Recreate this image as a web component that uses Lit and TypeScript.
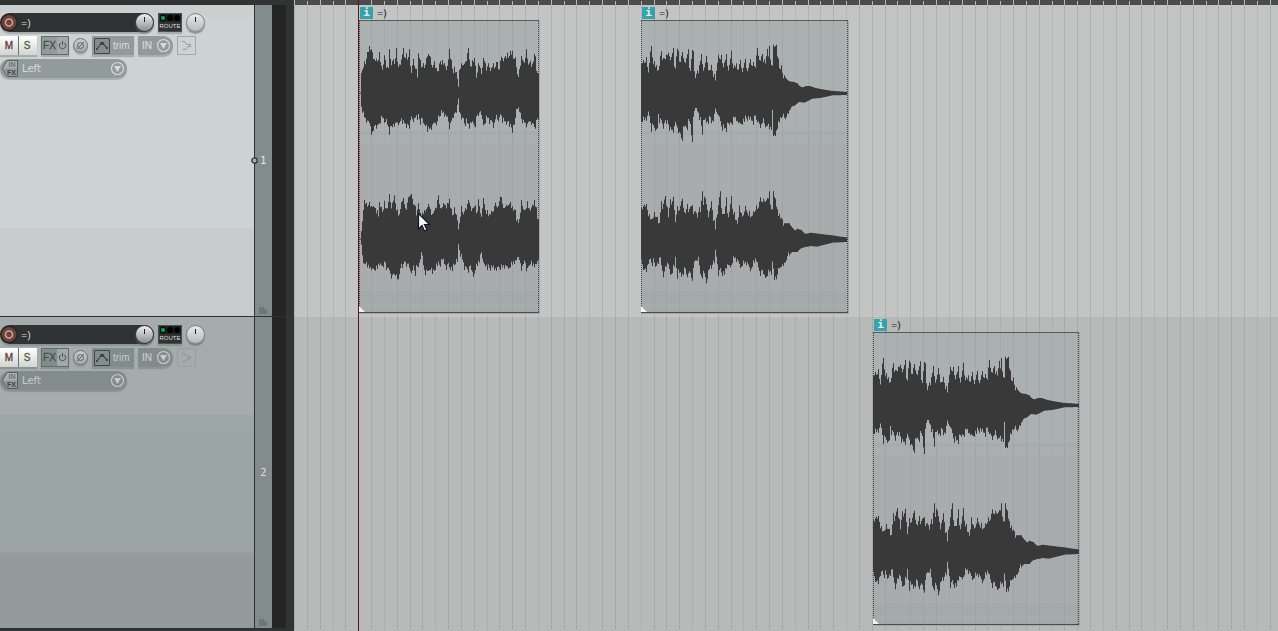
import { LitElement, html, svg, css } from "lit";
import { customElement, property } from "lit/decorators.js";
import { styleMap } from "lit/directives/style-map.js";

interface Clip {
  start: number;
  length: number;
  name: string;
  wave: string[];
}

interface Track {
  number: number;
  name: string;
  selected: boolean;
  clips: Clip[];
}

const STEP = 12.84;
const ARRANGE_SPAN = 4000;

/* Peak outlines, three units to a pixel, x counted from the clip's left edge. */
const INTRO_LEFT =
  "6,280 8,218 11,210 15,184 21,188 25,156 28,160 31,138 36,148 41,158 46,178 49,184 53,176 56,186 61,156 65,190 68,200 72,210 76,166 80,182 85,200 89,205 91,148 95,180 99,186 103,178 107,194 112,144 116,190 122,194 127,182 133,144 137,176 142,160 145,182 151,148 155,206 159,208 163,176 168,206 172,206 176,236 178,160 183,180 188,204 193,190 197,206 201,178 207,162 214,170 217,194 222,202 226,184 231,204 236,215 243,184 250,180 257,190 265,202 271,146 276,180 280,206 283,224 286,200 291,216 295,236 298,270 301,212 307,190 313,196 319,188 328,144 332,184 337,202 341,180 346,174 350,200 354,234 358,190 364,204 368,225 373,174 379,190 384,204 389,190 394,214 398,204 403,190 407,208 411,186 416,186 421,212 425,182 428,170 435,176 440,168 446,158 451,170 455,152 460,152 464,180 469,172 473,206 478,234 482,208 488,168 493,184 498,190 502,148 506,180 511,190 515,182 520,194 526,162 530,170 534,218 539,220 539,358 531,360 528,386 523,370 518,374 513,362 508,366 503,382 496,366 491,370 487,354 482,335 475,326 470,352 465,374 461,398 456,376 451,380 446,364 441,374 435,360 429,368 424,340 419,364 414,356 408,358 404,384 398,360 392,372 385,352 379,370 373,376 368,345 362,336 358,348 353,346 348,382 342,366 336,368 330,386 324,364 318,378 313,352 307,358 302,336 298,290 293,338 288,336 282,354 277,362 272,388 267,354 261,348 257,350 250,338 245,348 240,350 233,376 228,366 223,370 216,390 210,386 205,395 200,378 194,370 188,350 184,374 179,340 174,360 168,350 162,366 157,348 152,386 147,370 142,384 136,368 130,372 124,362 119,376 113,366 107,380 101,382 96,376 91,404 86,374 80,366 75,368 70,352 64,370 58,372 53,386 47,376 43,392 38,404 34,374 28,362 22,368 17,352 11,338 8,320 6,280";
const INTRO_RIGHT =
  "6,238 9,188 12,180 15,120 21,128 27,140 31,126 36,138 42,138 48,144 54,150 58,178 61,126 66,140 71,158 76,122 81,146 87,140 91,102 95,130 99,136 105,106 110,132 116,150 121,166 126,130 133,114 139,146 144,134 149,112 155,106 157,102 161,118 168,138 174,160 178,130 184,160 190,158 196,150 202,148 208,132 215,148 222,162 228,148 234,128 238,106 243,144 248,146 253,130 259,136 265,130 271,116 276,146 281,168 286,142 292,164 296,184 298,210 302,190 307,138 313,164 319,146 329,120 335,140 343,144 350,136 355,160 359,118 364,160 369,158 374,114 379,150 385,150 390,164 398,152 404,154 408,128 413,140 419,138 424,110 428,112 433,144 438,144 443,134 449,136 455,126 461,140 468,150 474,178 479,190 484,164 488,120 493,148 499,152 504,124 509,146 516,146 521,134 527,120 531,142 534,176 539,180 539,300 533,312 527,322 521,318 515,312 509,318 503,334 497,300 493,312 487,332 482,300 478,290 473,300 467,312 460,314 454,322 448,326 442,318 436,326 430,322 424,330 418,318 412,332 407,330 401,322 395,332 390,320 384,330 378,316 372,304 365,280 360,308 355,318 350,328 344,350 338,330 333,310 328,338 322,320 316,330 310,296 305,290 298,250 294,306 290,312 285,316 279,334 273,328 268,306 262,330 256,310 250,298 245,320 240,312 235,318 228,330 221,342 215,330 208,332 199,346 194,316 190,282 184,298 178,322 174,318 169,348 165,322 158,340 153,330 148,308 143,320 138,300 134,310 130,324 125,322 119,358 114,358 109,346 103,340 98,356 93,334 88,322 83,330 77,302 73,322 67,316 61,316 55,326 49,332 43,326 37,330 31,324 25,322 19,312 14,310 10,282 6,238";
const OUTRO_LEFT =
  "2,190 6,180 10,190 15,172 20,204 24,206 28,160 30,138 33,172 39,184 45,196 51,210 54,214 58,172 60,154 63,186 66,174 71,176 75,164 78,172 81,158 86,170 91,174 96,144 100,200 104,206 108,146 112,152 116,190 119,186 123,156 128,176 134,190 141,148 145,204 150,204 153,150 157,154 161,222 165,228 169,212 174,206 180,162 184,192 190,206 195,168 200,190 206,212 210,194 215,214 219,222 223,246 227,212 231,164 236,176 240,164 244,190 250,190 255,162 259,198 265,200 270,152 274,190 281,196 286,190 292,212 297,180 302,206 306,212 312,176 317,208 322,208 327,178 332,198 337,186 344,204 348,144 353,170 358,184 363,162 369,178 374,192 379,146 382,176 385,138 389,184 394,206 398,134 402,140 406,134 411,176 415,206 420,196 424,218 430,226 436,236 444,244 459,246 468,250 476,258 484,262 496,258 506,258 524,264 544,268 569,272 594,274 618,276 618,285 574,286 539,294 514,296 499,304 489,308 474,306 462,316 452,320 442,342 432,358 424,350 416,366 408,386 402,408 398,408 394,318 390,390 385,388 379,376 374,382 369,366 363,368 358,384 353,364 348,366 342,340 337,374 331,360 325,358 320,362 315,352 309,366 304,374 298,370 291,370 285,362 280,352 274,374 269,366 265,374 261,366 255,396 249,382 244,392 238,360 233,346 228,340 223,324 218,364 212,370 207,344 201,372 195,366 189,358 184,404 179,350 174,360 170,334 165,320 161,330 157,350 153,426 149,372 144,360 139,390 134,376 129,380 123,422 118,398 112,400 106,372 101,376 96,398 91,388 86,392 81,364 76,372 71,366 66,386 61,358 56,370 54,336 50,384 42,392 36,370 30,396 26,348 20,346 15,362 9,360 4,366 2,366";
const OUTRO_RIGHT =
  "2,144 6,142 10,134 12,148 15,132 20,152 26,164 32,178 39,156 44,172 50,170 56,190 60,124 64,150 67,134 72,108 77,140 80,142 83,178 87,118 91,136 96,110 100,150 105,190 108,138 112,154 117,144 123,116 128,146 134,162 139,132 144,150 149,140 154,136 159,156 164,154 171,170 174,142 180,150 183,94 187,140 190,110 194,116 199,150 204,164 210,124 214,150 219,180 223,214 226,176 231,150 237,94 242,150 247,162 251,162 255,112 259,160 265,160 270,108 274,146 280,156 286,180 291,188 296,136 302,162 308,166 313,138 319,160 325,152 331,170 337,154 343,154 347,136 352,146 357,112 362,126 367,116 374,126 379,116 385,94 389,140 394,156 398,94 402,116 408,148 416,162 424,178 430,190 444,190 452,200 462,212 470,206 480,210 494,222 509,218 539,222 574,226 599,230 618,232 618,246 574,248 544,256 529,260 509,258 489,262 479,266 469,276 454,276 444,286 434,306 426,318 418,322 410,342 405,358 399,360 395,300 390,344 385,336 379,348 374,354 368,342 363,324 358,348 352,320 346,302 340,308 334,320 328,334 322,312 316,316 310,310 304,318 298,324 292,302 286,306 280,294 274,310 268,322 262,314 256,326 250,344 244,348 238,322 232,348 227,290 223,266 219,310 212,326 206,324 200,356 195,370 190,336 184,356 178,340 174,302 168,302 162,300 157,324 153,362 148,336 143,338 138,352 132,318 126,346 120,350 114,334 108,356 105,292 99,320 94,340 88,344 82,310 76,320 66,352 62,316 56,290 51,312 44,320 39,302 34,318 28,294 22,312 16,336 8,330 4,310 2,300";

const TRACKS: Track[] = [
  {
    number: 1,
    name: "=)",
    selected: true,
    clips: [
      { start: 65, length: 180, name: "=)", wave: [INTRO_LEFT, INTRO_RIGHT] },
      { start: 347, length: 207, name: "=)", wave: [OUTRO_LEFT, OUTRO_RIGHT] },
    ],
  },
  {
    number: 2,
    name: "=)",
    selected: false,
    clips: [{ start: 579, length: 206, name: "=)", wave: [OUTRO_LEFT, OUTRO_RIGHT] }],
  },
];

/* Turns an outline into one vertical bar per pixel; bars beside a peak drop a little. */
const bars = (points: string, centre: number) => {
  const pts = points.split(" ").map((p) => p.split(",").map(Number));
  const turn = pts.findIndex((p, i) => i > 0 && p[1] > centre && pts[i - 1][1] < centre);
  const upper = pts.slice(0, turn);
  const lower = pts.slice(turn).reverse();
  const level = (side: number[][], col: number) => {
    const from = col * 3;
    const inside = side.filter((p) => p[0] >= from && p[0] < from + 3).map((p) => Math.abs(p[1] - centre));
    const i = side.findIndex((p) => p[0] >= from + 1.5);
    let mid = 0;
    if (i > 0) {
      const [a, b] = [side[i - 1], side[i]];
      mid = Math.abs(a[1] + ((b[1] - a[1]) * (from + 1.5 - a[0])) / (b[0] - a[0]) - centre);
    }
    if (inside.length) return Math.max(mid, ...inside);
    return mid > 50 ? mid - ((col * 7) % 5) * 3 : mid;
  };
  let d = "";
  const last = Math.ceil(upper[upper.length - 1][0] / 3);
  for (let col = Math.floor(upper[0][0] / 3); col < last; col++) {
    d += `M${col * 3 + 1.5} ${centre - level(upper, col)}V${centre + level(lower, col)}`;
  }
  return d;
};

const gridLines = (from: number, length: number, light: string, dark: string) => {
  const lines = [];
  for (let k = 0; k * STEP < from + length; k++) {
    const x = Math.round(k * STEP) - from;
    if (x < 0) continue;
    lines.push(svg`<path d="M${x + 0.5} 0V400" stroke=${k % 4 === 3 ? light : dark} stroke-dasharray="1 1"/>`);
  }
  return lines;
};

@customElement("daw-clip")
class DawClip extends LitElement {
  @property({ attribute: false }) clip!: Clip;

  static styles = css`
    :host { display: block; font: 11px/14px "Open Sans", sans-serif; color: #181c1e; }
    .label { display: flex; align-items: center; gap: 4px; height: 15px; padding-left: 1px; }
    .info {
      width: 13px; height: 12px; padding: 0; border: 0; background: #38a2aa; color: #d8f2f2;
      font: bold 11px/12px "DejaVu Sans Mono", monospace; text-align: center;
    }
    .body {
      position: relative; height: 293px; box-sizing: border-box;
      border-top: 1px solid #575c59; border-bottom: 1px solid #4a4d4d;
      box-shadow: 1px 1px 0 #a3a6a5;
      background: linear-gradient(#abb1b1 0 110px, #a6acac 110px 114px, #aaafb0 114px 122px,
        #a8acad 122px 270px, #a2abaa 270px 283px, #a7abac 283px 287px, #a2abaa 287px);
    }
    svg { display: block; width: 100%; height: 100%; }
  `;

  render() {
    const { start, length, name, wave } = this.clip;
    return html`
      <div class="label"><button class="info" aria-label="Item info">i</button><span>${name}</span></div>
      <div class="body">
        <svg aria-hidden="true">
          <g shape-rendering="crispEdges">
            ${gridLines(start, length, "#a2a8a8", "#959b9b")}
            <path d="M.5 0V291M${length - 0.5} 0V291" stroke="#454848" stroke-dasharray="1 1"/>
          </g>
          <g stroke="#393939" stroke-width="3.1" transform="translate(0 -21) scale(.33333)">
            <path d="M0 280H${length * 3}"/>
            <path d=${bars(wave[0], 280)}/>
            <g transform="translate(0 480)">
              <path d="M0 238H${length * 3}"/>
              <path d=${bars(wave[1], 238)}/>
            </g>
          </g>
          <path d="M0 285L7 292H0Z" fill="#f0f6f6"/>
        </svg>
      </div>
    `;
  }
}

@customElement("track-panel")
class TrackPanel extends LitElement {
  @property({ attribute: false }) track!: Track;

  static styles = css`
    :host { display: flex; height: 311px; border-bottom: 1px solid #2e3131; font: 11px/19px "Liberation Sans", sans-serif; }
    .panel {
      flex: 1; display: flex; flex-direction: column; align-items: flex-start; gap: 4px;
      padding-top: 8px; border-right: 1px solid #2e3232;
      --face: #929b9b; --ink: #d4dbdb;
      background: linear-gradient(#c9cfcf, #cdd3d3 20px, #cdd3d3 223px, #c8cccd 223px);
    }
    .panel.idle {
      --face: #838c8c; --ink: #c4cbca;
      background: linear-gradient(#a4adac 0 98px, #9ea7a8 98px 114px, #9ba5a3 114px 235px,
        #9c9c9d 235px 239px, #939c9a 239px);
    }
    .row { display: flex; align-items: center; height: 19px; }
    button, input, select { box-sizing: border-box; margin: 0; padding: 0; border: 0; font: inherit; color: inherit; appearance: none; }
    svg { display: block; }
    .shade { box-shadow: 0 2px 1px #5a646455; }
    .name { display: flex; align-items: center; width: 154px; height: 19px; background: #303333; border-radius: 10px; }
    .rec { width: 18px; height: 19px; background: none; }
    .name input.title { flex: 1; min-width: 0; height: 19px; padding-left: 3px; background: none; color: #d8dcdc; font: 11px/19px "Open Sans", sans-serif; }
    .knob {
      width: 19px; height: 19px; border-radius: 50%; border: 1px solid #3c4040;
      background: linear-gradient(#222, #222) center 3px / 1px 5px no-repeat, linear-gradient(#eee, #8c8f8f);
      box-shadow: 0 2px 1px #5a646488;
    }
    .knob.pan { border-color: #7c8282; background: linear-gradient(#222, #222) center 3px / 1px 5px no-repeat, linear-gradient(#e4e8e8, #b8bcbc); }
    .knob::-webkit-slider-thumb { appearance: none; width: 0; height: 0; }
    .route { width: 24px; height: 19px; margin: 0 4px; background: #303333; color: #d8dcdc; font-size: 6px; line-height: 9px; border: 1px solid #4b5050; }
    .row.mix { gap: 4px; color: var(--ink); }
    .pair { display: flex; height: 19px; }
    .ms { width: 18px; background: linear-gradient(#fff, #d2d3d3); color: #5c3a34; font-size: 10px; -webkit-text-stroke: .3px; }
    .ms.solo { border-left: 1px solid #6a7070; width: 19px; padding-right: 2px; color: #55602c; }
    .pair.fx { width: 28px; border: 1px solid #636c6c; box-sizing: border-box; color: #485050; font-size: 10px; line-height: 17px; }
    .fx button:first-child { flex: 1; background: var(--face); -webkit-text-stroke: .3px; }
    .fx button:last-child { width: 11px; background: #a0a9a9; }
    .round { width: 15px; height: 15px; border-radius: 50%; border: 1px solid #6a7272; background: linear-gradient(#c8cdcd, #a2a9a9); }
    .trim { display: flex; align-items: center; gap: 3px; width: 42px; height: 19px; background: var(--face); font-size: 10px; padding-left: 2px; }
    .in { display: flex; align-items: center; gap: 4px; width: 35px; height: 19px; padding-left: 4px; background: var(--face); border-radius: 0 10px 10px 0; font-size: 10px; -webkit-text-stroke: .2px; }
    .ghost { width: 19px; height: 19px; border: 1px solid #939b9b; background: none; opacity: .75; }
    .input { display: flex; align-items: center; width: 127px; height: 19px; border-radius: 10px; background: var(--face); color: var(--ink); }
    .infx { width: 18px; height: 19px; background: none; }
    .input select { flex: 1; height: 19px; padding-left: 4px; background: none; font: 10px/19px "DejaVu Sans", sans-serif; }
    .input .arrow { margin-right: 2px; }
    .strip {
      position: relative; display: flex; flex-direction: column; justify-content: center; align-items: center;
      width: 17px; background: #828c8d; color: #e2eaec; font: 10px/12px "DejaVu Sans", sans-serif;
    }
    .strip.idle { color: #e4dfc4; }
    .folder { position: absolute; bottom: 2px; left: 4px; }
    .node { position: absolute; left: -4px; top: 152px; }
    .meter { width: 14px; background: #252525; }
  `;

  arrow() {
    return html`<svg class="arrow" width="15" height="15" viewBox="0 0 15 15" aria-hidden="true">
      <circle cx="7.5" cy="7.5" r="6" fill="none" stroke="currentColor" stroke-width="1.2"/>
      <path d="M4 5H11L7.5 11Z" fill="currentColor"/></svg>`;
  }

  render() {
    const { number, name, selected } = this.track;
    const idle = selected ? "" : "idle";
    return html`
      <div class="panel ${idle}">
        <div class="row">
          <div class="name shade">
            <button class="rec" aria-label="Record arm">
              <svg width="18" height="19" viewBox="0 0 18 19">
                <circle cx="9" cy="9.5" r="8.5" fill="#231b19"/><circle cx="9" cy="9.5" r="7.5" fill="#6b4239"/>
                <circle cx="9" cy="9.5" r="3.5" fill="#6d3f36" stroke="#c9a79e" stroke-width="1.6"/>
              </svg>
            </button>
            <input class="title" aria-label="Track name" .value=${name} />
            <input class="knob" type="range" aria-label="Volume" />
          </div>
          <button class="route shade" aria-label="Route">
            <svg width="22" height="8" viewBox="0 0 22 8"><path d="M1 0H22V8H1Z" fill="#1f2121"/>
              <circle cx="4" cy="4" r="2.7" fill="#0c9a50" stroke="#000"/><circle cx="11" cy="4" r="3" fill="#000"/><circle cx="18" cy="4" r="3" fill="#000"/></svg>
            ROUTE
          </button>
          <input class="knob pan" type="range" aria-label="Pan" />
        </div>
        <div class="row mix">
          <div class="pair shade"><button class="ms">M</button><button class="ms solo">S</button></div>
          <div class="pair fx shade">
            <button>FX</button>
            <button aria-label="FX bypass"><svg width="11" height="11" viewBox="0 0 11 11" fill="none" stroke="currentColor"><path d="M3.5 3A3.2 3.2 0 1 0 7.500 3M5.500 1V5"/></svg></button>
          </div>
          <button class="round shade" aria-label="Phase">
            <svg width="13" height="13" viewBox="0 0 13 13" fill="none" stroke="#5c6464"><circle cx="6.5" cy="6.500" r="3"/><path d="M3 10L10 3"/></svg>
          </button>
          <button class="trim shade">
            <svg width="16" height="16" viewBox="0 0 16 16"><path d="M.5 .5H15.500V15.500H.500Z" fill="#848e8e" stroke="#3f4747"/><path d="M3 11L7 5.500H9L13 10" fill="none" stroke="#3f4747" stroke-width="1.200"/><path d="M6 4H10V7H6ZM2 10H4V12H2ZM12 9H14V11H12Z" fill="#3f4747"/></svg>
            trim
          </button>
          <button class="in shade">IN ${this.arrow()}</button>
          <button class="ghost" aria-label="Input routing">
            <svg width="17" height="17" viewBox="0 0 17 17" fill="none" stroke="#7f8888"><path d="M4 4.500H6.500L9 7.500H12.500V9.500H10L7.500 12.500H5"/></svg>
          </button>
        </div>
        <div class="row">
          <div class="input shade">
            <button class="infx" aria-label="Input FX">
              <svg width="18" height="19" viewBox="0 0 18 19">
                <path d="M17.500 1.500V17.500H7L2.500 9.500L7 1.500Z" fill="#a9b1b1" stroke="#566060"/><path d="M17 9.500V17H7L3.500 9.500Z" fill="#8f9999"/>
                <g font-family="Liberation Sans" font-size="7" font-weight="bold" text-anchor="middle"><text x="12" y="8" fill="#6a7474">IN</text><text x="11.500" y="16" fill="#3f4747">FX</text></g>
              </svg>
            </button>
            <select aria-label="Record input"><option>Left</option><option>Right</option></select>
            ${this.arrow()}
          </div>
        </div>
      </div>
      <div class="strip ${idle}">
        ${selected ? html`<svg class="node" width="7" height="7" viewBox="0 0 7 7" aria-hidden="true"><circle cx="3.500" cy="3.500" r="2.700" fill="#a9b0b0" stroke="#303434" stroke-width="1.300"/></svg>` : ""}
        <span>${number}</span>
        <svg class="folder" width="8" height="7" viewBox="0 0 8 7" aria-hidden="true"><path d="M0 0H5V2H8V7H0Z" fill="#6e7778"/></svg>
      </div>
      <div class="meter"></div>
    `;
  }
}

@customElement("app-root")
class AppRoot extends LitElement {
  static styles = css`
    :host { display: flex; min-height: 100vh; background: #323434; overflow: hidden; }
    .tracks { width: 286px; padding-top: 5px; flex: none; }
    .splitter { width: 8px; flex: none; }
    .arrange { position: relative; flex: 1; min-width: 0; overflow: hidden; display: flex; flex-direction: column; }
    .ruler { display: block; width: 100%; height: 5px; background: #4b4b4b; }
    .lane { position: relative; height: 312px; background: #c3c5c4; }
    .lane.idle { flex: 1; background: #b8bab9; }
    .grid { display: block; width: 100%; height: 100%; position: absolute; }
    .clip { position: absolute; top: 0; }
    .playhead { position: absolute; left: 64px; top: 0; bottom: 0; width: 1px; background: #621212; }
    .pointer { position: absolute; left: 123px; top: 212px; }
  `;

  render() {
    const ticks = [];
    for (let k = 0; k * STEP < ARRANGE_SPAN; k++) {
      ticks.push(svg`<path d="M${Math.round(k * STEP) + 0.5} ${k % 2}V5" stroke="#b9b9b9"/>`);
    }
    return html`
      <div class="tracks">${TRACKS.map((t) => html`<track-panel .track=${t}></track-panel>`)}</div>
      <div class="splitter"></div>
      <div class="arrange">
        <svg class="ruler" aria-hidden="true" shape-rendering="crispEdges">${ticks}</svg>
        ${TRACKS.map(
          (t) => html`<div class="lane ${t.selected ? "" : "idle"}">
            <svg class="grid" aria-hidden="true" shape-rendering="crispEdges">
              ${gridLines(0, ARRANGE_SPAN, t.selected ? "#a9abaa" : "#a2a4a3", t.selected ? "#9d9f9e" : "#979998")}
            </svg>
            ${t.clips.map(
              (c) => html`<daw-clip class="clip" .clip=${c} style=${styleMap({ left: `${c.start}px`, width: `${c.length}px` })}></daw-clip>`
            )}
          </div>`
        )}
        <div class="playhead"></div>
        <svg class="pointer" width="14" height="20" viewBox="0 0 14 20" aria-hidden="true">
          <path d="M1.500 1.500V17L5 13.500L7.500 19L10 18L7.500 12.500H12.500Z" fill="#f6f6f8" stroke="#15152a" stroke-width="1.200"/>
        </svg>
      </div>
    `;
  }
}
